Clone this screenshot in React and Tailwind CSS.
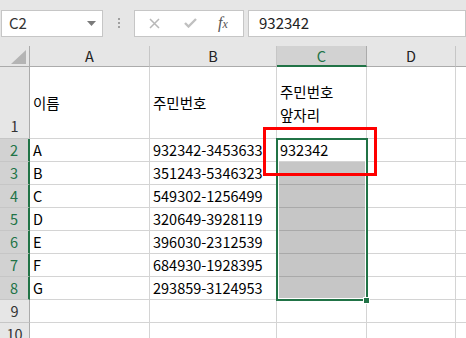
import React from 'react';

const cols = [
  { key: 'A', w: 'w-[120px]' },
  { key: 'B', w: 'w-[127px]' },
  { key: 'C', w: 'w-[90px]' },
  { key: 'D', w: 'w-[89px]' },
  { key: '', w: 'w-[40px]' },
];

const rows = [
  { n: 1, h: 'h-[72px]', a: '이름', b: '주민번호', c: ['주민번호', '앞자리'] },
  { n: 2, a: 'A', b: '932342-3453633', c: '932342' },
  { n: 3, a: 'B', b: '351243-5346323' },
  { n: 4, a: 'C', b: '549302-1256499' },
  { n: 5, a: 'D', b: '320649-3928119' },
  { n: 6, a: 'E', b: '396030-2312539' },
  { n: 7, a: 'F', b: '684930-1928395' },
  { n: 8, a: 'G', b: '293859-3124953' },
  { n: 9 },
  { n: 10 },
];

const font = { fontFamily: '"Noto Sans CJK KR", "Noto Sans", sans-serif' };

function FormulaBar() {
  return (
    <div className="flex items-center h-[46px] bg-[#e6e6e6] pl-[1px]">
      <div className="w-[102px] h-[27px] bg-white border border-[#c6c6c6] flex items-center justify-between pl-[7px] pr-[6px]">
        <span className="text-[15px] text-[#333]">C2</span>
        <svg width="9" height="5" viewBox="0 0 9 5"><path d="M0 0h9L4.5 5z" fill="#7a7a7a" /></svg>
      </div>
      <div className="w-[31px] flex flex-col items-center gap-[2px]">
        <span className="w-[2px] h-[2px] bg-[#a0a0a0]" />
        <span className="w-[2px] h-[2px] bg-[#a0a0a0]" />
        <span className="w-[2px] h-[2px] bg-[#a0a0a0]" />
      </div>
      <div className="w-[110px] h-[27px] bg-white border border-[#c6c6c6] flex items-center">
        <svg className="ml-[14px]" width="11" height="11" viewBox="0 0 11 11">
          <path d="M1 1l9 9M10 1l-9 9" stroke="#b8b8b8" strokeWidth="1.5" />
        </svg>
        <svg className="ml-[24px]" width="13" height="10" viewBox="0 0 13 10">
          <path d="M1 5l3.5 3.5L12 1" stroke="#c0c0c0" strokeWidth="2.4" fill="none" />
        </svg>
        <span className="ml-[21px] text-[16px] italic text-[#555] leading-none" style={{ fontFamily: '"Liberation Serif", serif' }}>
          f<span className="text-[12px]">x</span>
        </span>
      </div>
      <div className="ml-[4px] flex-1 h-[27px] bg-white border border-[#c6c6c6] flex items-center pl-[10px]">
        <span className="text-[15px] text-[#222]">932342</span>
      </div>
    </div>
  );
}

function Cell({ col, r, children }) {
  const sel = col === 'C' && r.n >= 3 && r.n <= 8;
  return (
    <div
      className={`${cols.find((c) => c.key === col).w} shrink-0 border-r border-b ${
        sel ? 'bg-[#c6c6c6] border-[#a9a9a9]' : 'bg-white border-[#d4d4d4]'
      } flex items-center pl-[3px] text-[14.5px] text-black overflow-hidden whitespace-nowrap`}
    >
      {children}
    </div>
  );
}

export default function App() {
  return (
    <div className="w-[466px] h-[338px] overflow-hidden bg-white relative" style={font}>
      <FormulaBar />
      <div className="flex h-[21px] bg-[#e6e6e6]">
        <div className="w-[30px] shrink-0 border-r border-b border-[#ababab] flex items-end justify-end pr-[3px] pb-[2px]">
          <svg width="15" height="14" viewBox="0 0 15 14"><path d="M15 0v14H0z" fill="#b4b4b4" /></svg>
        </div>
        {cols.map((c) =>
          c.key === 'C' ? (
            <div key={c.key} className={`${c.w} shrink-0 bg-[#d2d2d2] border-r border-[#ababab] border-b-2 border-b-[#217346] flex items-center justify-center text-[14.5px] text-[#217346]`}>
              {c.key}
            </div>
          ) : (
            <div key={c.key || 'E'} className={`${c.w} shrink-0 border-r border-b border-[#c6c6c6] border-b-[#ababab] flex items-center justify-center text-[14.5px] text-[#222]`}>
              {c.key}
            </div>
          )
        )}
      </div>
      {rows.map((r) => {
        const sel = r.n >= 2 && r.n <= 8;
        return (
          <div key={r.n} className={`flex ${r.h || 'h-[23px]'}`}>
            <div
              className={`w-[30px] shrink-0 border-b border-[#c6c6c6] flex justify-center text-[14.5px] ${
                r.n === 1 ? 'items-end pb-[1px]' : 'items-center'
              } ${
                sel
                  ? 'bg-[#d2d2d2] text-[#217346] border-r-2 border-r-[#217346]'
                  : 'bg-[#e6e6e6] text-[#333] border-r border-r-[#ababab]'
              }`}
            >
              {r.n}
            </div>
            <Cell col="A" r={r}>{r.a}</Cell>
            <Cell col="B" r={r}>{r.b}</Cell>
            <Cell col="C" r={r}>
              {Array.isArray(r.c) ? (
                <div className="leading-[23px]">
                  <div>{r.c[0]}</div>
                  <div>{r.c[1]}</div>
                </div>
              ) : (
                r.c
              )}
            </Cell>
            <Cell col="D" r={r} />
            <Cell col="" r={r} />
          </div>
        );
      })}
      {/* selection */}
      <div className="absolute left-[276px] top-[138px] w-[92px] h-[163px] border-2 border-[#217346] pointer-events-none">
        <div className="w-full h-full border border-white" />
      </div>
      <div className="absolute left-[363px] top-[297px] w-[7px] h-[7px] bg-[#217346] border border-white" />
      {/* red box */}
      <div className="absolute left-[263px] top-[127px] w-[114px] h-[49px] border-[3px] border-[#ff0000]" />
    </div>
  );
}
